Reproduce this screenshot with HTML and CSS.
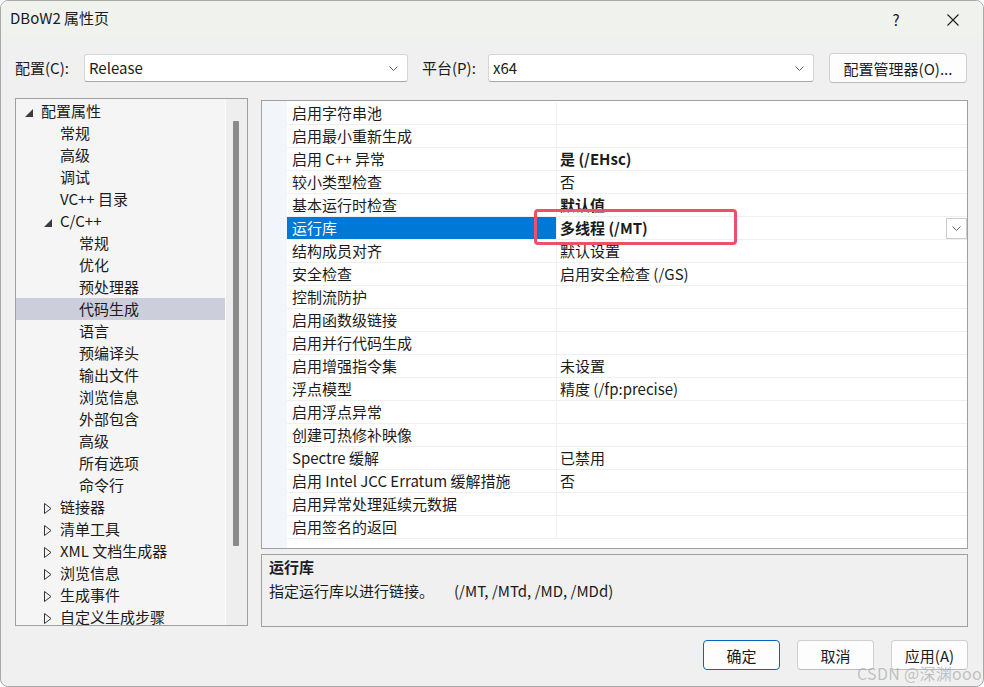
FILE: index.html
```html
<!DOCTYPE html>
<html lang="zh-CN">

<head>
    <meta charset="UTF-8">
    <title>DBoW2 属性页</title>
    <link rel="stylesheet" href="styles.css">
</head>

<body>
    <div class="window">
        <div class="titlebar">
            <span class="title">DBoW2 属性页</span>
            <span class="title-btn">?</span>
            <span class="title-btn close">
                <svg width="12" height="12" viewBox="0 0 12 12"><path d="M0.5 0.5 L11.5 11.5 M11.5 0.5 L0.5 11.5" stroke="#1f1f1f" stroke-width="1.1" fill="none"/></svg>
            </span>
        </div>

        <div class="config-row">
            <span class="label label-config">配置(C):</span>
            <div class="combo combo-config">
                <span>Release</span>
                <svg class="chevron" width="9" height="5" viewBox="0 0 9 5"><path d="M0.5 0.5 L4.5 4.5 L8.5 0.5" stroke="#606060" fill="none"/></svg>
            </div>
            <span class="label label-platform">平台(P):</span>
            <div class="combo combo-platform">
                <span>x64</span>
                <svg class="chevron" width="9" height="5" viewBox="0 0 9 5"><path d="M0.5 0.5 L4.5 4.5 L8.5 0.5" stroke="#606060" fill="none"/></svg>
            </div>
            <button class="btn btn-manager">配置管理器(O)...</button>
        </div>

        <div class="main">
            <div class="tree">
                <ul class="tree-list">
                    <li class="tree-row lvl0"><span class="exp"><svg width="8" height="8" viewBox="0 0 8 8"><polygon points="8,0 8,8 0,8" fill="#3c3c3c"/></svg></span>配置属性</li>
                    <li class="tree-row lvl1"><span class="exp"></span>常规</li>
                    <li class="tree-row lvl1"><span class="exp"></span>高级</li>
                    <li class="tree-row lvl1"><span class="exp"></span>调试</li>
                    <li class="tree-row lvl1"><span class="exp"></span>VC++ 目录</li>
                    <li class="tree-row lvl1"><span class="exp"><svg width="8" height="8" viewBox="0 0 8 8"><polygon points="8,0 8,8 0,8" fill="#3c3c3c"/></svg></span>C/C++</li>
                    <li class="tree-row lvl2"><span class="exp"></span>常规</li>
                    <li class="tree-row lvl2"><span class="exp"></span>优化</li>
                    <li class="tree-row lvl2"><span class="exp"></span>预处理器</li>
                    <li class="tree-row lvl2 selected"><span class="exp"></span>代码生成</li>
                    <li class="tree-row lvl2"><span class="exp"></span>语言</li>
                    <li class="tree-row lvl2"><span class="exp"></span>预编译头</li>
                    <li class="tree-row lvl2"><span class="exp"></span>输出文件</li>
                    <li class="tree-row lvl2"><span class="exp"></span>浏览信息</li>
                    <li class="tree-row lvl2"><span class="exp"></span>外部包含</li>
                    <li class="tree-row lvl2"><span class="exp"></span>高级</li>
                    <li class="tree-row lvl2"><span class="exp"></span>所有选项</li>
                    <li class="tree-row lvl2"><span class="exp"></span>命令行</li>
                    <li class="tree-row lvl1"><span class="exp"><svg class="closed" width="8" height="11" viewBox="0 0 8 11"><polygon points="0.5,0.5 7,5.5 0.5,10.5" fill="none" stroke="#333"/></svg></span>链接器</li>
                    <li class="tree-row lvl1"><span class="exp"><svg class="closed" width="8" height="11" viewBox="0 0 8 11"><polygon points="0.5,0.5 7,5.5 0.5,10.5" fill="none" stroke="#333"/></svg></span>清单工具</li>
                    <li class="tree-row lvl1"><span class="exp"><svg class="closed" width="8" height="11" viewBox="0 0 8 11"><polygon points="0.5,0.5 7,5.5 0.5,10.5" fill="none" stroke="#333"/></svg></span>XML 文档生成器</li>
                    <li class="tree-row lvl1"><span class="exp"><svg class="closed" width="8" height="11" viewBox="0 0 8 11"><polygon points="0.5,0.5 7,5.5 0.5,10.5" fill="none" stroke="#333"/></svg></span>浏览信息</li>
                    <li class="tree-row lvl1"><span class="exp"><svg class="closed" width="8" height="11" viewBox="0 0 8 11"><polygon points="0.5,0.5 7,5.5 0.5,10.5" fill="none" stroke="#333"/></svg></span>生成事件</li>
                    <li class="tree-row lvl1"><span class="exp"><svg class="closed" width="8" height="11" viewBox="0 0 8 11"><polygon points="0.5,0.5 7,5.5 0.5,10.5" fill="none" stroke="#333"/></svg></span>自定义生成步骤</li>
                </ul>
                <div class="scrollbar">
                    <div class="thumb"></div>
                </div>
            </div>

            <div class="right">
                <div class="grid">
                    <div class="grid-row"><div class="name">启用字符串池</div><div class="value"></div></div>
                    <div class="grid-row"><div class="name">启用最小重新生成</div><div class="value"></div></div>
                    <div class="grid-row"><div class="name">启用 C++ 异常</div><div class="value bold">是 (/EHsc)</div></div>
                    <div class="grid-row"><div class="name">较小类型检查</div><div class="value">否</div></div>
                    <div class="grid-row"><div class="name">基本运行时检查</div><div class="value bold">默认值</div></div>
                    <div class="grid-row selected">
                        <div class="name">运行库</div>
                        <div class="value bold">多线程 (/MT)
                            <span class="drop-btn"><svg width="9" height="5" viewBox="0 0 9 5"><path d="M0.5 0.5 L4.5 4.5 L8.5 0.5" stroke="#606060" fill="none"/></svg></span>
                        </div>
                    </div>
                    <div class="grid-row"><div class="name">结构成员对齐</div><div class="value">默认设置</div></div>
                    <div class="grid-row"><div class="name">安全检查</div><div class="value">启用安全检查 (/GS)</div></div>
                    <div class="grid-row"><div class="name">控制流防护</div><div class="value"></div></div>
                    <div class="grid-row"><div class="name">启用函数级链接</div><div class="value"></div></div>
                    <div class="grid-row"><div class="name">启用并行代码生成</div><div class="value"></div></div>
                    <div class="grid-row"><div class="name">启用增强指令集</div><div class="value">未设置</div></div>
                    <div class="grid-row"><div class="name">浮点模型</div><div class="value">精度 (/fp:precise)</div></div>
                    <div class="grid-row"><div class="name">启用浮点异常</div><div class="value"></div></div>
                    <div class="grid-row"><div class="name">创建可热修补映像</div><div class="value"></div></div>
                    <div class="grid-row"><div class="name">Spectre 缓解</div><div class="value">已禁用</div></div>
                    <div class="grid-row"><div class="name">启用 Intel JCC Erratum 缓解措施</div><div class="value">否</div></div>
                    <div class="grid-row"><div class="name">启用异常处理延续元数据</div><div class="value"></div></div>
                    <div class="grid-row"><div class="name">启用签名的返回</div><div class="value"></div></div>
                    <div class="mark"></div>
                </div>
                <div class="desc">
                    <div class="desc-title">运行库</div>
                    <div class="desc-text">指定运行库以进行链接。<span class="desc-flags">(/MT, /MTd, /MD, /MDd)</span></div>
                </div>
            </div>
        </div>

        <div class="footer">
            <button class="btn btn-ok">确定</button>
            <button class="btn">取消</button>
            <button class="btn">应用(A)</button>
        </div>

        <div class="watermark">CSDN @深渊ooo</div>
    </div>
</body>

</html>
```

FILE: styles.css
```css
* {
    box-sizing: border-box;
}

body {
    margin: 0;
    background-color: #ffffff;
    font-family: "Noto Sans CJK SC", "Noto Sans", sans-serif;
    font-size: 15px;
    color: #1b1b1b;
}

.window {
    position: relative;
    width: 984px;
    height: 687px;
    border: 1px solid #a8a8a8;
    border-radius: 8px;
    background-color: #f0f0f0;
    overflow: hidden;
    display: flex;
    flex-direction: column;
}

.titlebar {
    height: 37px;
    display: flex;
    align-items: center;
    padding-left: 9px;
    background-color: #f0f2ee;
}

.title {
    flex: 1;
    line-height: 20px;
    margin-bottom: 3px;
}

.title-btn {
    width: 46px;
    height: 30px;
    display: flex;
    align-items: center;
    justify-content: center;
    font-size: 15px;
}

.close {
    margin-left: 11px;
    margin-right: 7px;
}

/* top row */
.config-row {
    display: flex;
    align-items: center;
    height: 30px;
    margin-top: 15px;
    padding-left: 14px;
}

.label {
    line-height: 20px;
}

.label-config {
    width: 69px;
}

.label-platform {
    width: 66px;
    margin-left: 14px;
}

.combo {
    height: 28px;
    display: flex;
    align-items: center;
    padding: 0 9px 0 4px;
    background-color: #fff;
    border: 1px solid #d6d6d6;
    border-bottom-color: #a8a8a8;
    border-radius: 3px;
}

.combo span {
    flex: 1;
    margin-bottom: 1px;
}

.combo-config {
    width: 324px;
}

.combo-platform {
    width: 326px;
}

.btn {
    height: 30px;
    font-family: inherit;
    font-size: 15px;
    color: #1b1b1b;
    background-color: #fdfdfd;
    border: 1px solid #d0d0d0;
    border-bottom-color: #bcbcbc;
    border-radius: 4px;
    padding: 0;
}

.btn-manager {
    width: 138px;
    margin-left: 15px;
}

/* tree + grid */
.main {
    display: flex;
    margin-top: 15px;
    padding: 0 15px 0 14px;
}

.tree {
    width: 233px;
    height: 528px;
    border: 1px solid #a0a0a0;
    background-color: #f5f5f5;
    display: flex;
    overflow: hidden;
}

.tree-list {
    list-style: none;
    margin: 0;
    padding: 1px 0 0 0;
    flex: 1;
}

.tree-row {
    height: 22px;
    line-height: 22px;
    display: flex;
    align-items: center;
    white-space: nowrap;
}

.tree-row.selected {
    background-color: #cccedb;
}

.exp {
    width: 17px;
    height: 22px;
    display: flex;
    align-items: center;
    padding-left: 1px;
    padding-top: 3px;
}

.exp .closed {
    margin-top: -1px;
}

.lvl0 {
    padding-left: 8px;
}

.lvl1 {
    padding-left: 27px;
}

.lvl2 {
    padding-left: 46px;
}

.scrollbar {
    width: 22px;
    background-color: #eeeeee;
    border-left: 1px solid #fafafa;
    padding: 22px 0 0 7px;
}

.thumb {
    width: 6px;
    height: 425px;
    background-color: #8a8a8a;
    border-radius: 1px;
}

.right {
    flex: 1;
    margin-left: 13px;
    padding-top: 2px;
    display: flex;
    flex-direction: column;
}

.grid {
    position: relative;
    height: 449px;
    padding-top: 1px;
    border: 1px solid #a0a0a0;
    background: linear-gradient(to right, #f2f5fa 25px, #ffffff 25px);
}

.grid-row {
    display: flex;
    height: 23px;
    margin-left: 25px;
    border-bottom: 1px solid #eef0f3;
}

.grid-row .name {
    width: 269px;
    padding-left: 5px;
    line-height: 22px;
    white-space: nowrap;
}

.grid-row .value {
    flex: 1;
    display: flex;
    align-items: center;
    padding-left: 3px;
    border-left: 1px solid #eef0f3;
    line-height: 22px;
    white-space: nowrap;
}

.bold {
    font-weight: 700;
}

.grid-row.selected .name {
    background-color: #0078d7;
    color: #ffffff;
}

.drop-btn {
    margin-left: auto;
    width: 21px;
    height: 21px;
    display: flex;
    align-items: center;
    justify-content: center;
    border: 1px solid #cccccc;
    background-color: #fff;
}

.mark {
    position: absolute;
    left: 272px;
    top: 108px;
    width: 203px;
    height: 36px;
    border: 3px solid #ef5066;
    border-radius: 4px;
}

.desc {
    height: 73px;
    margin-top: 5px;
    border: 1px solid #a0a0a0;
    background-color: #f0f0f0;
    padding: 2px 7px 0 7px;
}

.desc-title {
    font-weight: 700;
    line-height: 20px;
}

.desc-text {
    margin-top: 4px;
    line-height: 20px;
}

.desc-flags {
    margin-left: 20px;
}

/* bottom buttons */
.footer {
    display: flex;
    justify-content: flex-end;
    gap: 17px;
    margin-top: 13px;
    padding-right: 15px;
}

.footer .btn {
    width: 77px;
}

.btn-ok {
    border-color: #0067c0;
}

.watermark {
    position: absolute;
    right: 1px;
    bottom: 4px;
    font-size: 16px;
    line-height: 18px;
    color: rgba(150, 150, 150, 0.55);
    letter-spacing: 0.3px;
}
```
